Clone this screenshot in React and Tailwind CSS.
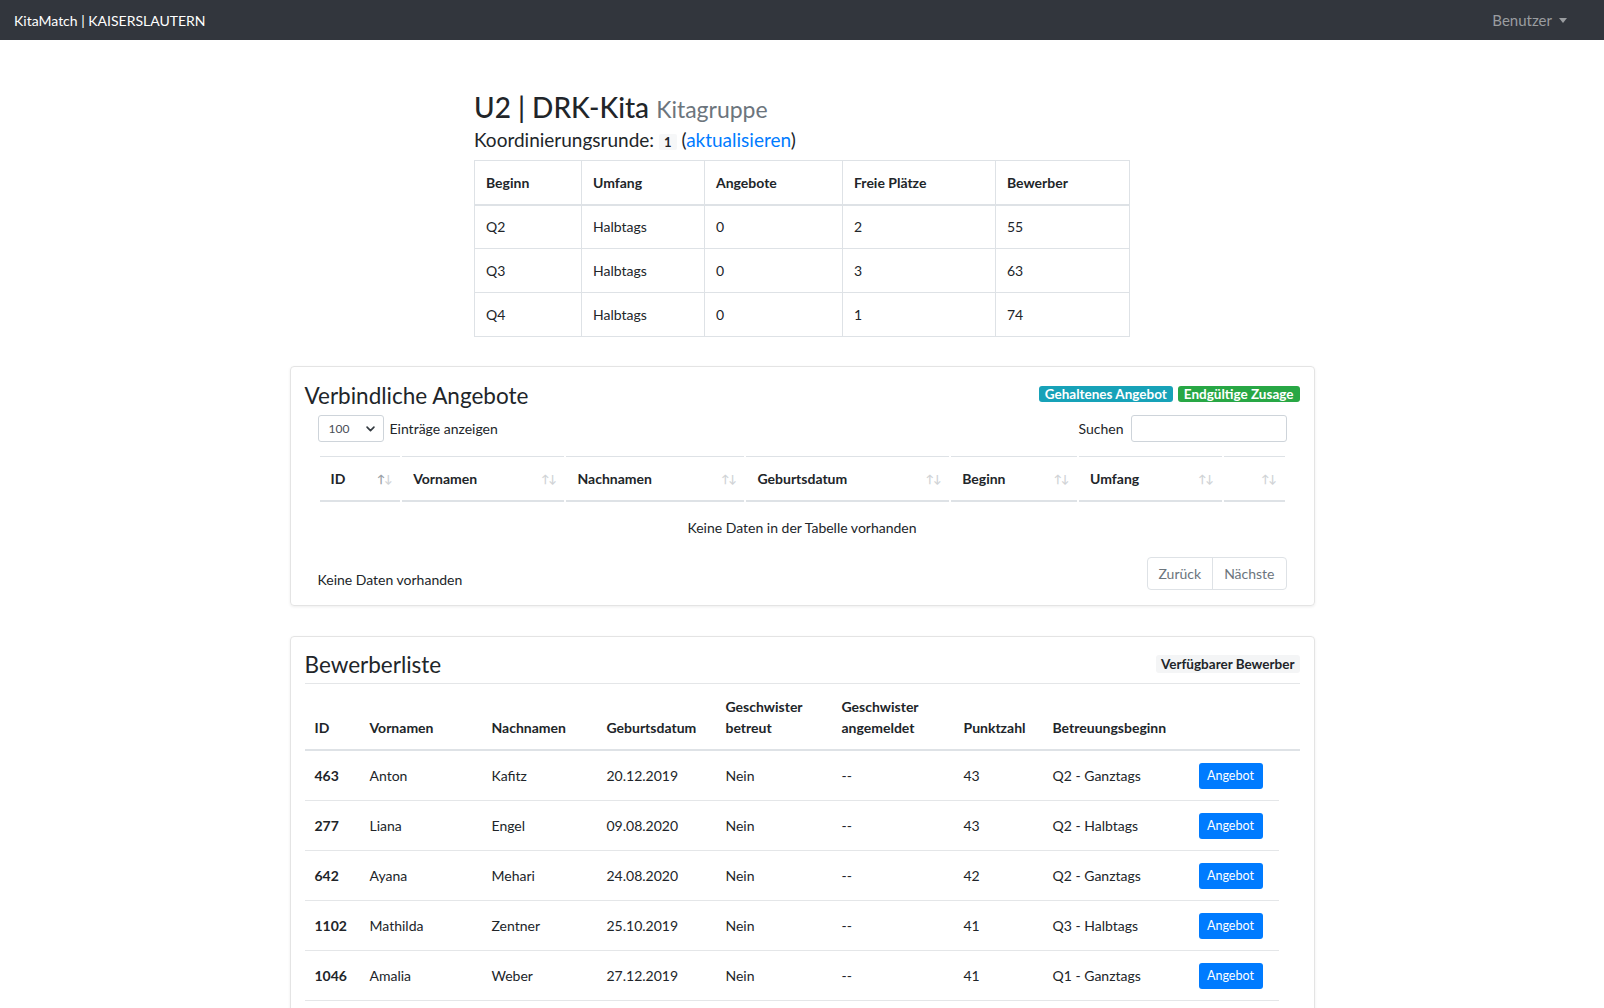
import React from "react";

const summary = [
  { beginn: "Q2", umfang: "Halbtags", angebote: "0", frei: "2", bewerber: "55" },
  { beginn: "Q3", umfang: "Halbtags", angebote: "0", frei: "3", bewerber: "63" },
  { beginn: "Q4", umfang: "Halbtags", angebote: "0", frei: "1", bewerber: "74" },
];

const offerCols = [
  { label: "ID", w: "w-[82px]", active: true },
  { label: "Vornamen", w: "w-[165px]" },
  { label: "Nachnamen", w: "w-[181px]" },
  { label: "Geburtsdatum", w: "w-[206px]" },
  { label: "Beginn", w: "w-[128px]" },
  { label: "Umfang", w: "w-[145px]" },
  { label: "", w: "w-[62px]" },
];

const applicants = [
  { id: "463", vor: "Anton", nach: "Kafitz", geb: "20.12.2019", punkte: "43", start: "Q2 - Ganztags" },
  { id: "277", vor: "Liana", nach: "Engel", geb: "09.08.2020", punkte: "43", start: "Q2 - Halbtags" },
  { id: "642", vor: "Ayana", nach: "Mehari", geb: "24.08.2020", punkte: "42", start: "Q2 - Ganztags" },
  { id: "1102", vor: "Mathilda", nach: "Zentner", geb: "25.10.2019", punkte: "41", start: "Q3 - Halbtags" },
  { id: "1046", vor: "Amalia", nach: "Weber", geb: "27.12.2019", punkte: "41", start: "Q1 - Ganztags" },
];

function SortIcon({ active }) {
  return (
    <span className="flex text-[11px] leading-none tracking-[-1px]">
      <span className={active ? "text-[#9aa0a6]" : "text-[#d0d3d6]"}>↑</span>
      <span className="text-[#d0d3d6]">↓</span>
    </span>
  );
}

function Caret() {
  return <span className="ml-[7px] inline-block h-0 w-0 border-x-[4px] border-t-[5px] border-x-transparent border-t-[#9a9da0]" />;
}

export default function App() {
  return (
    <div className="min-h-screen bg-white font-[Lato,'Liberation_Sans',sans-serif] text-[#212529]">
      {/* Navbar */}
      <nav className="flex h-10 items-center justify-between bg-[#32363d] pl-[14px] pr-[37px]">
        <span className="text-[14px] text-white">KitaMatch | KAISERSLAUTERN</span>
        <span className="flex items-center text-[15px] text-[#9a9da0]">
          Benutzer
          <Caret />
        </span>
      </nav>

      {/* Kita summary */}
      <div className="mx-auto w-[656px] pt-[50px]">
        <h2 className="text-[28px] font-medium leading-[34px]">
          U2 | DRK-Kita <small className="text-[23px] font-normal text-[#6c757d]">Kitagruppe</small>
        </h2>
        <p className="mt-[1px] text-[19px] leading-[26px]">
          Koordinierungsrunde:{" "}
          <code className="rounded-[2px] bg-[#f6f7f8] px-[5px] font-[Lato,sans-serif] text-[13px] font-bold">1</code>{" "}
          (<a className="text-[#007bff]">aktualisieren</a>)
        </p>
        <table className="mt-[5px] w-full border-collapse border border-[#dee2e6] text-[14px]">
          <thead>
            <tr className="h-[44px] border-b-2 border-[#dee2e6] text-left">
              <th className="w-[107px] border border-[#dee2e6] px-[11px] font-bold">Beginn</th>
              <th className="w-[123px] border border-[#dee2e6] px-[11px] font-bold">Umfang</th>
              <th className="w-[138px] border border-[#dee2e6] px-[11px] font-bold">Angebote</th>
              <th className="w-[153px] border border-[#dee2e6] px-[11px] font-bold">Freie Plätze</th>
              <th className="border border-[#dee2e6] px-[11px] font-bold">Bewerber</th>
            </tr>
          </thead>
          <tbody>
            {summary.map((r) => (
              <tr key={r.beginn} className="h-[44px]">
                <td className="border border-[#dee2e6] px-[11px]">{r.beginn}</td>
                <td className="border border-[#dee2e6] px-[11px]">{r.umfang}</td>
                <td className="border border-[#dee2e6] px-[11px]">{r.angebote}</td>
                <td className="border border-[#dee2e6] px-[11px]">{r.frei}</td>
                <td className="border border-[#dee2e6] px-[11px]">{r.bewerber}</td>
              </tr>
            ))}
          </tbody>
        </table>
      </div>

      {/* Verbindliche Angebote */}
      <div className="mx-auto mt-[29px] w-[1025px] rounded-[4px] border border-[#e4e4e4] px-[14px] pb-[15px] pt-[16px] shadow-[0_1px_3px_rgba(0,0,0,0.07)]">
        <div className="flex items-center justify-between">
          <h4 className="text-[22.5px] leading-[26px]">Verbindliche Angebote</h4>
          <div className="flex gap-[5px] self-start pt-[3px]">
            <span className="rounded-[3px] bg-[#17a2b8] px-[6px] text-[13.5px] font-bold leading-[16px] text-white">Gehaltenes Angebot</span>
            <span className="rounded-[3px] bg-[#28a745] px-[6px] text-[13.5px] font-bold leading-[16px] text-white">Endgültige Zusage</span>
          </div>
        </div>

        <div className="px-[13px]">
          <div className="mt-[6px] flex items-center justify-between text-[14px]">
            <label className="flex items-center gap-[6px]">
              <span className="flex h-[27px] w-[66px] items-center justify-between rounded-[3px] border border-[#ced4da] pl-[10px] pr-[7px] text-[12px] text-[#495057]">
                100
                <svg width="11" height="11" viewBox="0 0 16 16" fill="none" stroke="#343a40" strokeWidth="2.4" strokeLinecap="round" strokeLinejoin="round">
                  <path d="M3 6l5 5 5-5" />
                </svg>
              </span>
              Einträge anzeigen
            </label>
            <label className="flex items-center gap-[7px]">
              Suchen
              <span className="h-[27px] w-[156px] rounded-[3px] border border-[#ced4da]" />
            </label>
          </div>

          <table className="mt-[14px] w-full border-separate border-spacing-x-[2px] border-spacing-y-0 text-[14px]">
            <thead>
              <tr>
                {offerCols.map((c, i) => (
                  <th key={i} className={`${c.w} h-[46px] border-b-2 border-t border-[#dee2e6] pl-[11px] pr-[9px] text-left font-bold`}>
                    <div className="flex items-center justify-between">
                      <span>{c.label}</span>
                      <SortIcon active={c.active} />
                    </div>
                  </th>
                ))}
              </tr>
            </thead>
            <tbody>
              <tr>
                <td colSpan={7} className="h-[50px] text-center text-[14px]">Keine Daten in der Tabelle vorhanden</td>
              </tr>
            </tbody>
          </table>

          <div className="mt-[5px] flex items-start justify-between text-[14px]">
            <span className="pt-[12px]">Keine Daten vorhanden</span>
            <div className="flex h-[33px] rounded-[4px] border border-[#dee2e6] text-[#6c757d]">
              <span className="flex items-center border-r border-[#dee2e6] px-[11px]">Zurück</span>
              <span className="flex items-center px-[11px]">Nächste</span>
            </div>
          </div>
        </div>
      </div>

      {/* Bewerberliste */}
      <div className="mx-auto mt-[30px] w-[1025px] rounded-[4px] border border-[#e4e4e4] px-[14px] pb-[16px] pt-[15px] shadow-[0_1px_3px_rgba(0,0,0,0.07)]">
        <div className="flex items-start justify-between border-b border-[#e4e6e8] pb-[5px]">
          <h4 className="text-[22.5px] leading-[26px]">Bewerberliste</h4>
          <span className="mt-[3px] rounded-[3px] bg-[#f4f5f6] px-[5px] text-[13.5px] font-bold leading-[18px]">Verfügbarer Bewerber</span>
        </div>

        <table className="w-full border-collapse text-[14px]">
          <thead>
            <tr className="text-left align-bottom leading-[21px]">
              <th className="w-[54px] border-b-2 border-[#dee2e6] pb-[11px] pl-[10px] pt-[12px] font-bold">ID</th>
              <th className="w-[122px] border-b-2 border-[#dee2e6] pb-[11px] pl-[11px] pt-[12px] font-bold">Vornamen</th>
              <th className="w-[115px] border-b-2 border-[#dee2e6] pb-[11px] pl-[11px] pt-[12px] font-bold">Nachnamen</th>
              <th className="w-[119px] border-b-2 border-[#dee2e6] pb-[11px] pl-[11px] pt-[12px] font-bold">Geburtsdatum</th>
              <th className="w-[116px] border-b-2 border-[#dee2e6] pb-[11px] pl-[11px] pt-[12px] font-bold">Geschwister<br />betreut</th>
              <th className="w-[122px] border-b-2 border-[#dee2e6] pb-[11px] pl-[11px] pt-[12px] font-bold">Geschwister<br />angemeldet</th>
              <th className="w-[89px] border-b-2 border-[#dee2e6] pb-[11px] pl-[11px] pt-[12px] font-bold">Punktzahl</th>
              <th className="w-[146px] border-b-2 border-[#dee2e6] pb-[11px] pl-[11px] pt-[12px] font-bold">Betreuungsbeginn</th>
              <th className="w-[91px] border-b-2 border-[#dee2e6]"></th>
              <th className="border-b-2 border-[#dee2e6]"></th>
            </tr>
          </thead>
          <tbody>
            {applicants.map((a) => (
              <tr key={a.id} className="h-[50px]">
                <td className="border-b border-[#e4e6e8] pl-[10px] font-bold">{a.id}</td>
                <td className="border-b border-[#e4e6e8] pl-[11px]">{a.vor}</td>
                <td className="border-b border-[#e4e6e8] pl-[11px]">{a.nach}</td>
                <td className="border-b border-[#e4e6e8] pl-[11px]">{a.geb}</td>
                <td className="border-b border-[#e4e6e8] pl-[11px]">Nein</td>
                <td className="border-b border-[#e4e6e8] pl-[11px]">--</td>
                <td className="border-b border-[#e4e6e8] pl-[11px]">{a.punkte}</td>
                <td className="border-b border-[#e4e6e8] pl-[11px]">{a.start}</td>
                <td className="border-b border-[#e4e6e8] pl-[11px]">
                  <span className="mt-[2px] flex h-[26px] w-[64px] items-center justify-center rounded-[3px] bg-[#007bff] text-[12.5px] text-white">Angebot</span>
                </td>
                <td></td>
              </tr>
            ))}
          </tbody>
        </table>
      </div>
    </div>
  );
}
